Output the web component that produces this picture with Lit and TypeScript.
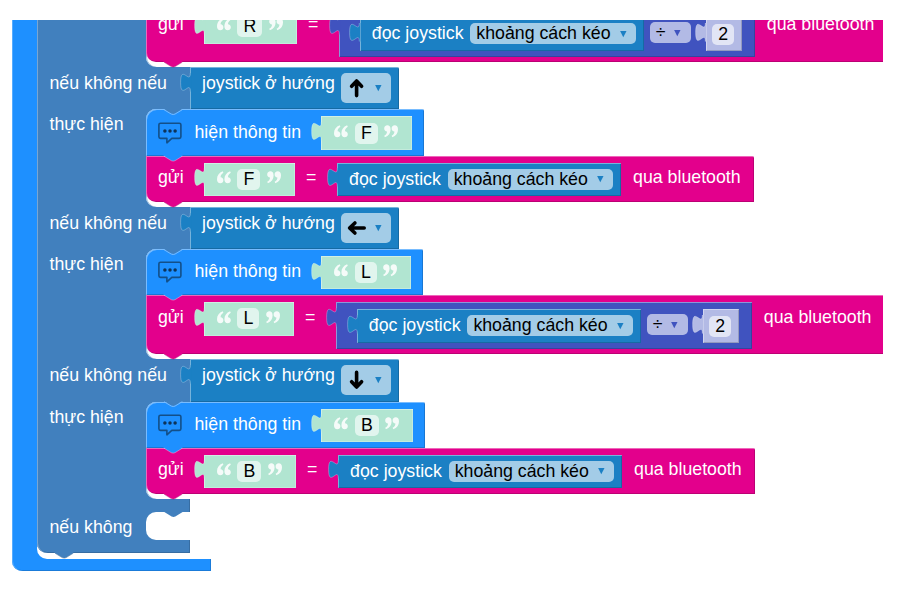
import { LitElement, html, css, svg, nothing, TemplateResult } from "lit";
import { customElement } from "lit/decorators.js";

type Dir = "up" | "left" | "down";
interface Branch {
  dir?: Dir;
  letter: string;
  halved: boolean;
}

const BRANCHES: Branch[] = [
  { letter: "R", halved: true },
  { dir: "up", letter: "F", halved: false },
  { dir: "left", letter: "L", halved: true },
  { dir: "down", letter: "B", halved: false },
];

const TURN: Record<Dir, number> = { up: 0, left: -90, down: 180 };

@customElement("app-root")
export class AppRoot extends LitElement {
  static styles = css`
    :host {
      display: block;
      box-sizing: border-box;
      height: 600px;
      padding-top: 20px;
      background: #fff;
      overflow: hidden;
      font: 17.75px/20px "Liberation Sans", Arial, sans-serif;
      color: #fff;
      white-space: nowrap;
    }
    .viewport {
      width: 883px;
      height: 560px;
      overflow: hidden;
    }
    svg {
      display: block;
      overflow: visible;
      flex: none;
    }
    .loop {
      width: 199px;
      margin: -17px 0 0 12px;
      box-sizing: border-box;
      padding: 0 0 12.5px 25px;
      background: #1e90ff;
      border-radius: 0 0 0 10px;
      box-shadow: inset 1px 0 #56acff, inset -1px -1px #1a7bd9;
    }
    .loop-mouth {
      background: #fff;
      border-radius: 0 0 0 10px;
      padding-bottom: 5.7px;
    }
    .if {
      --c: #4180be;
      position: relative;
      width: 153px;
      background: var(--c);
      border-radius: 0 0 0 10px;
      box-shadow: inset 1px 0 #7aa6d2, inset 0 -1px #376da2;
    }
    .header {
      display: flex;
      height: 42.2px;
    }
    .header .label {
      margin-top: 6px;
    }
    .label {
      box-sizing: border-box;
      padding-left: 12.5px;
      width: 109px;
      flex: none;
    }
    .header .label {
      width: 153px;
    }
    .body {
      display: flex;
    }
    .body .label {
      padding-top: 5px;
    }
    .mouth {
      width: 44px;
      flex: none;
      padding-bottom: 4.9px;
      background: #fff;
      border-radius: 10px 0 0 10px;
      box-shadow: inset 1px 0 #9fbfdf;
    }
    .mouth.cut {
      border-radius: 0 0 0 10px;
    }
    .arm {
      position: relative;
      height: 13.2px;
      box-shadow: inset -1px 0 #376da2;
    }
    .arm.last {
      height: 12.8px;
    }
    .mouth.empty {
      height: 28.3px;
      padding: 0;
      box-shadow: none;
    }
    .block {
      position: relative;
      display: flex;
      width: max-content;
      box-sizing: border-box;
      background: var(--c);
      box-shadow: inset 1px 1px rgba(255, 255, 255, 0.4), inset -1px -1px rgba(0, 0, 0, 0.17);
    }
    .show {
      --c: #1e90ff;
      height: 46.2px;
      padding: 0 12.3px 0 12px;
      border-radius: 10px 2px 0 0;
      z-index: 1;
    }
    .send {
      --c: #e3008c;
      height: 46.3px;
      padding: 0 13.3px 0 12px;
      border-radius: 0 2px 0 10px;
    }
    .send.tall {
      height: 59.3px;
    }
    .send.tall .qua {
      padding-right: 30px;
    }
    .send > span {
      margin-top: 11.4px;
    }
    .send > .block,
    .show > .block {
      margin-top: 7px;
    }
    .show > span {
      margin: 12.3px 20.3px 0 12.5px;
    }
    .show > .chat {
      margin-top: 12.4px;
    }
    .word {
      width: 26px;
      margin-right: 20px;
    }
    .eq {
      width: 10px;
      margin: 0 21.1px 0 11.4px;
    }
    .qua {
      margin-left: 11.9px;
    }
    .string {
      --c: #b1e5d1;
      height: 33.5px;
      padding: 0 13.8px 0 12.8px;
      box-shadow: inset 1px 1px rgba(255, 255, 255, 0.4), inset -1px -1px rgba(255, 255, 255, 0.25);
    }
    .string > .quote {
      margin-top: 8.4px;
    }
    .field {
      box-sizing: border-box;
      height: 21px;
      margin: 6.3px 6.5px 0 6.7px;
      padding: 0 6px;
      border-radius: 5px;
      line-height: 20px;
      background: rgba(255, 255, 255, 0.62);
      color: #000;
    }
    .sensor {
      --c: #1b80c4;
      height: 33.5px;
      padding: 0 8px 0 12px;
    }
    .sensor > span {
      margin-top: 6px;
    }
    .drop {
      display: flex;
      box-sizing: border-box;
      height: 21px;
      margin-top: 6px;
      padding: 0 9.3px 0 6px;
      border-radius: 5px;
      line-height: 21px;
      background: rgba(255, 255, 255, 0.6);
      color: #000;
    }
    .sensor .drop {
      margin-left: 6.8px;
    }
    .drop .caret {
      margin: 7.6px 0 0 9px;
    }
    .math {
      --c: #4053bf;
      height: 46.5px;
      padding: 7px 12.7px 0 20.7px;
    }
    .math > .drop {
      margin: 5px 14.8px 0 5.8px;
      width: 41.3px;
      line-height: 20px;
    }
    .number {
      --c: #b3bae5;
      width: 36.5px;
      height: 33.5px;
    }
    .number .field {
      margin: 6.5px 0 0 6.5px;
    }
    .cond {
      --c: #1b80c4;
      height: 42.2px;
      padding: 0 8px 0 12px;
      border-radius: 0 2px 0 0;
      flex: none;
    }
    .cond > span {
      margin-top: 6px;
    }
    .cond .drop {
      width: 50px;
      height: 30px;
      margin: 6px 0 0 6.3px;
      padding: 6px 0 0 7px;
      border-radius: 5px;
    }
    .cond .caret {
      margin: 6px 0 0 8.4px;
    }
    .notch {
      position: absolute;
      left: 18.3px;
      top: 100%;
      margin-top: -1px;
      z-index: 2;
    }
    .notch.in {
      top: 0;
      margin-top: -0.4px;
    }
    .tab {
      position: absolute;
      left: -9.3px;
      top: 5.8px;
    }
  `;

  private notch(line: string) {
    return html`<svg class="notch" width="18.3" height="6" viewBox="0 0 18.3 6">
      <path d="M-.5 0V1L0 1L7.3 5.6Q9.2 6.4 11 5.6L18.3 1V0Z" fill="var(--c)" />
      <path d="M0 1.2L7.3 5.7Q9.2 6.5 11 5.7L18.3 1.2" fill="none" stroke=${line} />
    </svg>`;
  }

  private socket() {
    return html`<svg class="notch in" width="18.3" height="6" viewBox="0 0 18.3 6">
      <path d="M0 0L7.3 4.6Q9.2 5.4 11 4.6L18.3 0Z" fill="#4180be" />
      <path d="M0 .7L7.3 5.1Q9.2 5.9 11 5.1L18.3 .7" fill="none" stroke="#78bcff" />
    </svg>`;
  }

  private tab() {
    return html`<svg class="tab" width="10" height="19" viewBox="0 0 10 19">
      <path d="M10.3 0H9.3C9.3 12.2 -.4 -9.4 -.4 9.4S9.3 6.3 9.3 18.5H10.3Z" fill="var(--c)" />
      <path d="M9.3 0C9.3 12.2 -.4 -9.4 -.4 9.4S9.3 6.3 9.3 18.5" fill="none"
        stroke="rgba(255,255,255,.3)" stroke-width=".9" />
    </svg>`;
  }

  private caret(color: string) {
    return html`<svg class="caret" width="7" height="6" viewBox="0 0 7 6">
      <path d="M.1 0H6.5L3.3 6.2Z" fill=${color} />
    </svg>`;
  }

  private quote(closing: boolean) {
    const mark = svg`<path d="M5.7 .3C2 1.7 0 4.6 0 8.2C0 10.8 1.3 12.3 3.3 12.3C5.1 12.3 6.4 11 6.4 9.2C6.4 7.5 5.3 6.3 3.6 6.2C3.6 4.4 4.5 3 6.4 1.8Z" />`;
    return html`<svg class="quote" width="14" height="13" viewBox="0 0 14 13" fill="#fff" opacity=".88">
      <g transform=${closing ? "rotate(180 7 6.3)" : "rotate(0)"}>
        ${mark}<g transform="translate(7.4 0)">${mark}</g>
      </g>
    </svg>`;
  }

  private text(value: string) {
    return html`<div class="block string">
      ${this.tab()}${this.quote(false)}
      <span class="field">${value}</span>
      ${this.quote(true)}
    </div>`;
  }

  private sensor() {
    return html`<div class="block sensor">
      ${this.tab()}<span>đọc joystick</span>
      <div class="drop"><span>khoảng cách kéo</span>${this.caret("#1b80c4")}</div>
    </div>`;
  }

  private half() {
    return html`<div class="block math">
      ${this.tab()}${this.sensor()}
      <div class="drop"><span>÷</span>${this.caret("#4053bf")}</div>
      <div class="block number">${this.tab()}<span class="field">2</span></div>
    </div>`;
  }

  private show(value: string) {
    return html`<div class="block show">
      ${this.socket()}
      <svg class="chat" width="24" height="23" viewBox="0 0 24 23">
        <path d="M2.5 1.2H21.3Q22.9 1.2 22.9 2.8V14.8Q22.9 16.4 21.3 16.4H13.8L8.9 20.8V16.4H2.5Q.9 16.4 .9 14.8V2.8Q.9 1.2 2.5 1.2Z"
          fill="none" stroke="#134f88" stroke-width="1.6" stroke-linejoin="round" />
        <g fill="#0d3359"><circle cx="6.9" cy="9" r="1.75" /><circle cx="12" cy="9" r="1.75" /><circle cx="17.1" cy="9" r="1.75" /></g>
      </svg>
      <span>hiện thông tin</span>${this.text(value)}
      ${this.notch("rgba(255,255,255,.35)")}
    </div>`;
  }

  private send(b: Branch) {
    return html`<div class="block send ${b.halved ? "tall" : ""}">
      <span class="word">gửi</span>${this.text(b.letter)}
      <span class="eq">=</span>${b.halved ? this.half() : this.sensor()}
      <span class="qua">qua bluetooth</span>
      ${this.notch("rgba(160,0,95,.4)")}
    </div>`;
  }

  private header(dir: Dir) {
    return html`<div class="header">
      <span class="label">nếu không nếu</span>
      <div class="block cond">
        ${this.tab()}<span>joystick ở hướng</span>
        <div class="drop">
          <svg width="18" height="18" viewBox="0 0 18 18">
            <path transform="rotate(${TURN[dir]} 8.6 9)" d="M8.6 16.6V2.4M3.6 7.3L8.6 2L13.6 7.3"
              fill="none" stroke="#000" stroke-width="3.6" stroke-linecap="round" stroke-linejoin="round" />
          </svg>
          ${this.caret("#1b80c4")}
        </div>
      </div>
    </div>`;
  }

  private branch(b: Branch): TemplateResult {
    return html`
      ${b.dir ? this.header(b.dir) : nothing}
      <div class="body">
        <span class="label">${b.dir ? "thực hiện" : nothing}</span>
        <div class="mouth ${b.dir ? "" : "cut"}">
          ${b.dir ? this.show(b.letter) : nothing}${this.send(b)}
        </div>
      </div>`;
  }

  render() {
    return html`<div class="viewport">
      <div class="loop">
        <div class="loop-mouth">
          <div class="if">
            ${BRANCHES.map((b) => this.branch(b))}
            <div class="arm"></div>
            <div class="body">
              <span class="label">nếu không</span>
              <div class="mouth empty">
                <svg width="44" height="6" viewBox="0 0 44 6">
                  <path d="M18.3 0L25.6 4.6Q27.5 5.4 29.3 4.6L36.6 0Z" fill="#4180be" />
                </svg>
              </div>
            </div>
            <div class="arm last"></div>
            ${this.notch("rgba(40,90,140,.5)")}
          </div>
        </div>
      </div>
    </div>`;
  }
}
